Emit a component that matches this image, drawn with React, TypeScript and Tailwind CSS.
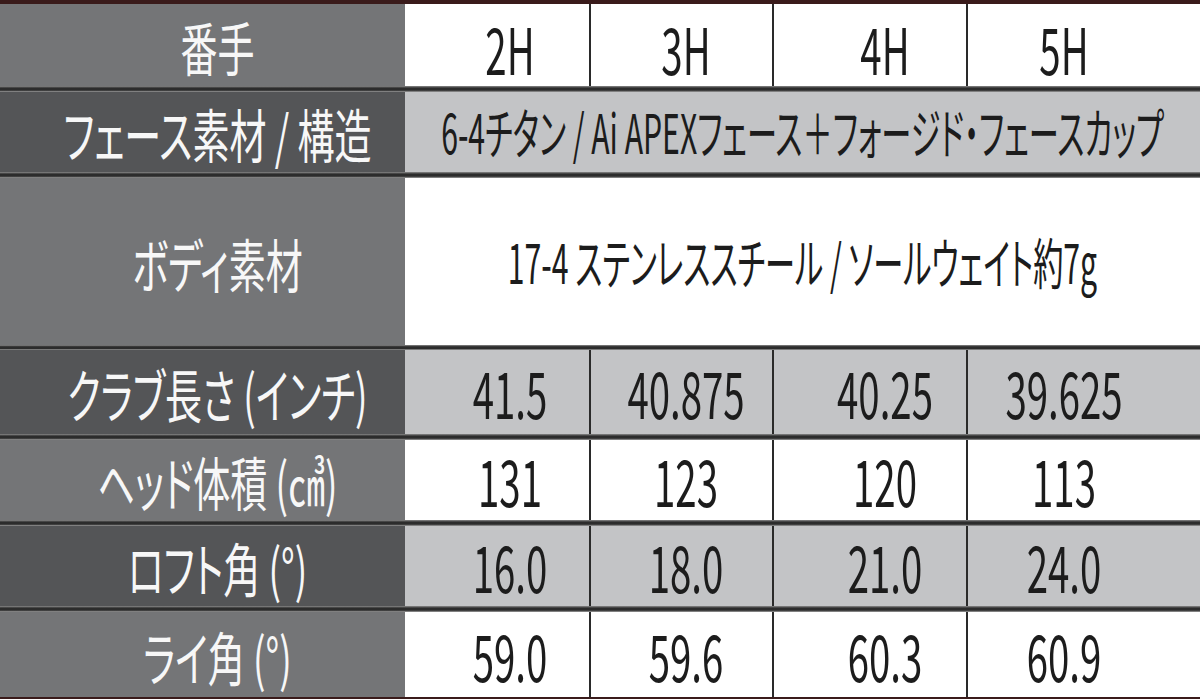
import React from "react";

const LBL =
  "inline-block whitespace-nowrap leading-[1.45] text-[37px] scale-y-[1.58] text-[#f7f7f7] [font-feature-settings:'palt']";
const VAL =
  "inline-block whitespace-nowrap leading-[1.45] text-[38.4px] scale-y-[1.67] text-[#1c1c1c] [font-feature-settings:'palt']";
const SPAN =
  "inline-block whitespace-nowrap leading-[1.45] text-[30.2px] scale-y-[1.8] text-[#1c1c1c] [font-feature-settings:'palt']";

const SEP_BG =
  "shrink-0 bg-[linear-gradient(to_bottom,#8c8c8c,#2c2c2c_35%,#2c2c2c_70%,#a0a0a0)]";

function Sep({ h = "h-[6px]" }: { h?: string }) {
  return <div className={`${h} ${SEP_BG}`} />;
}

function Label({ children, bg }: { children: React.ReactNode; bg: string }) {
  return (
    <div className={`flex items-center justify-center pl-[30px] pt-[4px] ${bg}`}>
      <span className={LBL}>{children}</span>
    </div>
  );
}

function Vals({ v, bg, pt = "" }: { v: string[]; bg: string; pt?: string }) {
  return (
    <>
      <div className={`flex items-center justify-center pl-[26px] ${pt} ${bg}`}>
        <span className={VAL}>{v[0]}</span>
      </div>
      <div className={`flex items-center justify-center pl-[9px] ${pt} border-l-2 border-[#2a2a2a] ${bg}`}>
        <span className={VAL}>{v[1]}</span>
      </div>
      <div className={`flex items-center justify-center pl-[30px] ${pt} border-l-2 border-[#2a2a2a] ${bg}`}>
        <span className={VAL}>{v[2]}</span>
      </div>
      <div className={`flex items-center justify-center pr-[40px] ${pt} border-l-2 border-[#2a2a2a] ${bg}`}>
        <span className={VAL}>{v[3]}</span>
      </div>
    </>
  );
}

const GRID = "grid grid-cols-[405px_184px_183px_194px_1fr] shrink-0";
const LIGHT = "bg-[#747577]";
const DARK = "bg-[#545557]";
const WHITE = "bg-white";
const GRAY = "bg-[#c3c4c6]";

export default function App() {
  return (
    <div className="w-[1200px] h-[699px] overflow-hidden bg-white flex flex-col font-['Noto_Sans_CJK_JP','Noto_Sans',sans-serif]">
      <div className="h-[4px] shrink-0 bg-[#3a1b1b]" />
      <div className={`${GRID} h-[82px]`}>
        <Label bg={LIGHT}>番手</Label>
        <Vals v={["2H", "3H", "4H", "5H"]} bg={WHITE} pt="pt-[5px]" />
      </div>
      <Sep />
      <div className={`${GRID} h-[80px]`}>
        <Label bg={DARK}>フェース素材 / 構造</Label>
        <div className={`col-span-4 flex items-center justify-center ${GRAY}`}>
          <span className={SPAN}>6-4チタン / Ai APEXフェース＋フォージド・フェースカップ</span>
        </div>
      </div>
      <Sep />
      <div className={`${GRID} h-[167px]`}>
        <Label bg={LIGHT}>ボディ素材</Label>
        <div className={`col-span-4 flex items-center justify-center ${WHITE}`}>
          <span className={SPAN}>17-4 ステンレススチール / ソールウェイト約7g</span>
        </div>
      </div>
      <Sep h="h-[5px]" />
      <div className={`${GRID} h-[84px]`}>
        <Label bg={DARK}>クラブ長さ (インチ)</Label>
        <Vals v={["41.5", "40.875", "40.25", "39.625"]} bg={GRAY} />
      </div>
      <Sep />
      <div className={`${GRID} h-[80px]`}>
        <Label bg={LIGHT}>ヘッド体積 (㎤)</Label>
        <Vals v={["131", "123", "120", "113"]} bg={WHITE} />
      </div>
      <Sep />
      <div className={`${GRID} h-[80px]`}>
        <Label bg={DARK}>ロフト角 (°)</Label>
        <Vals v={["16.0", "18.0", "21.0", "24.0"]} bg={GRAY} />
      </div>
      <Sep />
      <div className={`${GRID} h-[85px]`}>
        <Label bg={LIGHT}>ライ角 (°)</Label>
        <Vals v={["59.0", "59.6", "60.3", "60.9"]} bg={WHITE} />
      </div>
      <div className="h-[2px] shrink-0 bg-[#3a1b1b]" />
    </div>
  );
}
